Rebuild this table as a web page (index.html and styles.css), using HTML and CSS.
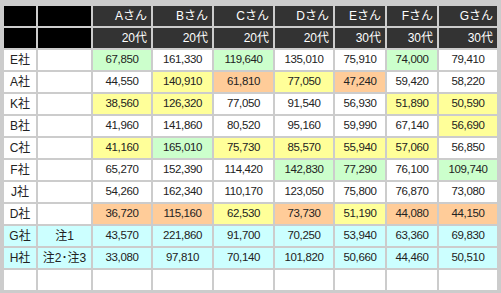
FILE: index.html
```html
<!DOCTYPE html>
<html lang="ja">
<head>
<meta charset="utf-8">
<link rel="stylesheet" href="styles.css">
</head>
<body>
<div class="sheet">
  <div class="c blk"></div><div class="c blk"></div>
  <div class="c hd">Aさん</div><div class="c hd">Bさん</div><div class="c hd">Cさん</div><div class="c hd">Dさん</div><div class="c hd">Eさん</div><div class="c hd">Fさん</div><div class="c hd">Gさん</div>
  <div class="c blk"></div><div class="c blk"></div>
  <div class="c hd">20代</div><div class="c hd">20代</div><div class="c hd">20代</div><div class="c hd">20代</div><div class="c hd">30代</div><div class="c hd">30代</div><div class="c hd">30代</div>

  <div class="c nm">E社</div><div class="c"></div>
  <div class="c g">67,850</div><div class="c">161,330</div><div class="c g">119,640</div><div class="c">135,010</div><div class="c">75,910</div><div class="c g">74,000</div><div class="c">79,410</div>

  <div class="c nm">A社</div><div class="c"></div>
  <div class="c">44,550</div><div class="c y">140,910</div><div class="c o">61,810</div><div class="c y">77,050</div><div class="c o">47,240</div><div class="c">59,420</div><div class="c">58,220</div>

  <div class="c nm">K社</div><div class="c"></div>
  <div class="c y">38,560</div><div class="c y">126,320</div><div class="c">77,050</div><div class="c">91,540</div><div class="c">56,930</div><div class="c y">51,890</div><div class="c y">50,590</div>

  <div class="c nm">B社</div><div class="c"></div>
  <div class="c">41,960</div><div class="c">141,860</div><div class="c">80,520</div><div class="c">95,160</div><div class="c">59,990</div><div class="c">67,140</div><div class="c y">56,690</div>

  <div class="c nm">C社</div><div class="c"></div>
  <div class="c y">41,160</div><div class="c g">165,010</div><div class="c y">75,730</div><div class="c y">85,570</div><div class="c y">55,940</div><div class="c y">57,060</div><div class="c">56,850</div>

  <div class="c nm">F社</div><div class="c"></div>
  <div class="c">65,270</div><div class="c">152,390</div><div class="c">114,420</div><div class="c g">142,830</div><div class="c g">77,290</div><div class="c">76,100</div><div class="c g">109,740</div>

  <div class="c nm">J社</div><div class="c"></div>
  <div class="c">54,260</div><div class="c">162,340</div><div class="c">110,170</div><div class="c">123,050</div><div class="c">75,800</div><div class="c">76,870</div><div class="c">73,080</div>

  <div class="c nm">D社</div><div class="c"></div>
  <div class="c o">36,720</div><div class="c o">115,160</div><div class="c y">62,530</div><div class="c o">73,730</div><div class="c y">51,190</div><div class="c o">44,080</div><div class="c o">44,150</div>

  <div class="c nm cy">G社</div><div class="c nm cy">注1</div>
  <div class="c cy">43,570</div><div class="c cy">221,860</div><div class="c cy">91,700</div><div class="c cy">70,250</div><div class="c cy">53,940</div><div class="c cy">63,360</div><div class="c cy">69,830</div>

  <div class="c nm cy">H社</div><div class="c nm cy">注2･注3</div>
  <div class="c cy">33,080</div><div class="c cy">97,810</div><div class="c cy">70,140</div><div class="c cy">101,820</div><div class="c cy">50,660</div><div class="c cy">44,460</div><div class="c cy">50,510</div>

  <div class="c"></div><div class="c"></div>
  <div class="c"></div><div class="c"></div><div class="c"></div><div class="c"></div><div class="c"></div><div class="c"></div><div class="c"></div>
</div>
</body>
</html>
```

FILE: styles.css
```css
html, body {
  margin: 0;
  padding: 0;
  background: #cccccc;
}
.sheet {
  display: grid;
  grid-template-columns: 32px 53px 58px 59px 59px 58px 50px 50px 58px;
  grid-auto-rows: 20px;
  gap: 2px;
  padding: 6px 4px 3px 4px;
  background: #cccccc;
  font-family: "Liberation Sans", "Noto Sans CJK JP", sans-serif;
  font-size: 11.5px;
  letter-spacing: -0.4px;
  color: #222222;
}
.c {
  background: #ffffff;
  display: flex;
  align-items: center;
  justify-content: center;
  white-space: nowrap;
  line-height: 1;
}
.nm {
  font-size: 12px;
  letter-spacing: 0;
}
.blk {
  background: #000000;
}
.hd {
  background: #333333;
  color: #ffffff;
  justify-content: flex-end;
  padding-right: 4px;
  font-size: 12px;
  letter-spacing: 0;
}
.g { background: #ccffcc; }
.y { background: #ffff99; }
.o { background: #ffcc99; }
.cy { background: #ccffff; }
```
